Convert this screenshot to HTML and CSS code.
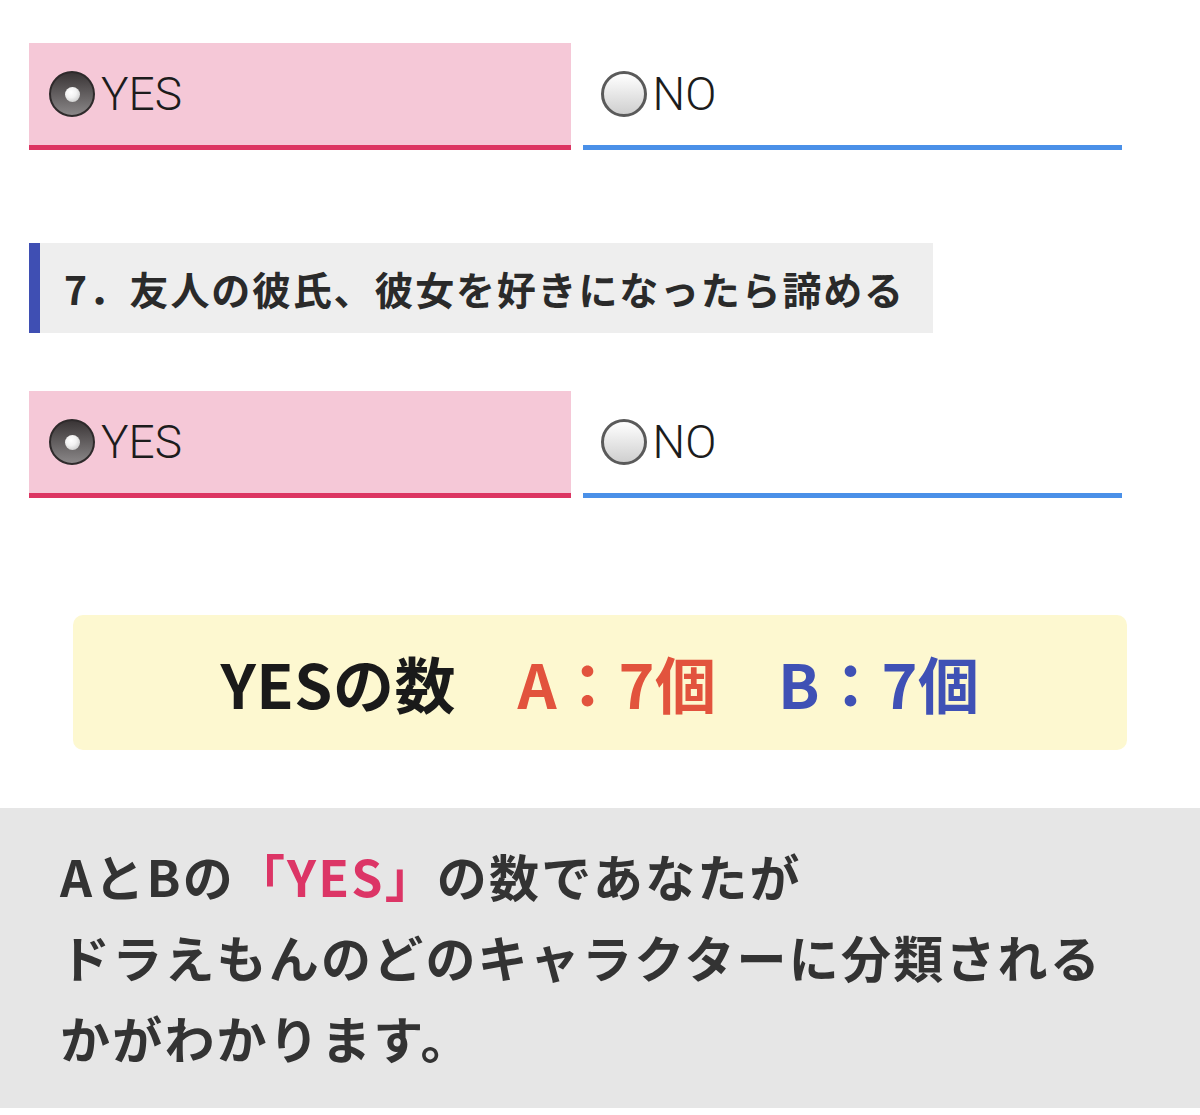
FILE: index.html
```html
<!DOCTYPE html>
<html lang="ja">
<head>
<meta charset="utf-8">
<link rel="stylesheet" href="styles.css">
</head>
<body>
<div class="page">
  <div class="choices">
    <div class="choice yes"><span class="radio on"></span><span class="label">YES</span></div>
    <div class="choice no"><span class="radio"></span><span class="label">NO</span></div>
  </div>

  <h2 class="question">7．友人の彼氏、彼女を好きになったら諦める</h2>

  <div class="choices second">
    <div class="choice yes"><span class="radio on"></span><span class="label">YES</span></div>
    <div class="choice no"><span class="radio"></span><span class="label">NO</span></div>
  </div>

  <div class="result">YESの数　<span class="a">A：7個</span>　<span class="b">B：7個</span></div>

  <div class="note">
    <p>AとBの<span class="pink">「YES」</span>の数であなたが<br>ドラえもんのどのキャラクターに分類される<br>かがわかります。</p>
  </div>
</div>
</body>
</html>
```

FILE: styles.css
```css
html, body {
  margin: 0;
  padding: 0;
  background: #ffffff;
}

.page {
  width: 1200px;
  padding-top: 43px;
  font-family: "Noto Sans CJK JP", "Noto Sans", sans-serif;
  color: #222;
}

.choices {
  display: flex;
  gap: 12px;
  margin-left: 29px;
  width: 1093px;
}

.choices.second {
  margin-top: 58px;
}

.choice {
  flex: 1;
  height: 102px;
  display: flex;
  align-items: center;
  padding-left: 20px;
  box-sizing: content-box;
}

.choice.yes {
  background: #f5c8d7;
  border-bottom: 5px solid #dc3562;
}

.choice.no {
  background: #ffffff;
  border-bottom: 5px solid #4a90e8;
  padding-left: 18px;
}

.radio {
  position: relative;
  width: 46px;
  height: 46px;
  border-radius: 50%;
  box-sizing: border-box;
  border: 3px solid #5a5a5a;
  background: linear-gradient(#ffffff, #cfcfcf);
  flex: none;
}

.radio.on {
  border: 2px solid #2e2a2b;
  background: linear-gradient(#3a3536, #8a8788);
}

.radio.on::after {
  content: "";
  position: absolute;
  left: 14px;
  top: 14px;
  width: 15px;
  height: 15px;
  border-radius: 50%;
  background: radial-gradient(circle at 40% 35%, #ffffff 0, #f2f2f2 40%, #b9b9b9 100%);
}

.label {
  font-family: "Roboto", "Liberation Sans", sans-serif;
  font-weight: 300;
  font-size: 46px;
  line-height: 1;
  margin-left: 6px;
  color: #1c1c1c;
}

.question {
  margin: 93px 0 0 29px;
  width: 904px;
  height: 90px;
  box-sizing: border-box;
  background: #eeeeee;
  border-left: 11px solid #3f4fb3;
  padding-left: 24px;
  display: flex;
  align-items: center;
  font-size: 39px;
  font-weight: 700;
  color: #2a2a2a;
  letter-spacing: 1.8px;
}

.result {
  margin: 117px 73px 0;
  height: 135px;
  border-radius: 10px;
  background: #fdf8d0;
  display: flex;
  align-items: center;
  justify-content: center;
  font-size: 61px;
  font-weight: 700;
  color: #1a1a1a;
  letter-spacing: 0.5px;
}

.result .a {
  color: #e2533d;
}

.result .b {
  color: #3f51b5;
}

.note {
  margin-top: 58px;
  height: 300px;
  box-sizing: border-box;
  background: #e6e6e6;
  padding: 27px 0 0 60px;
}

.note p {
  margin: 0;
  font-size: 50px;
  line-height: 81px;
  font-weight: 700;
  color: #333333;
  letter-spacing: 2.2px;
}

.pink {
  color: #dc3566;
}
```
